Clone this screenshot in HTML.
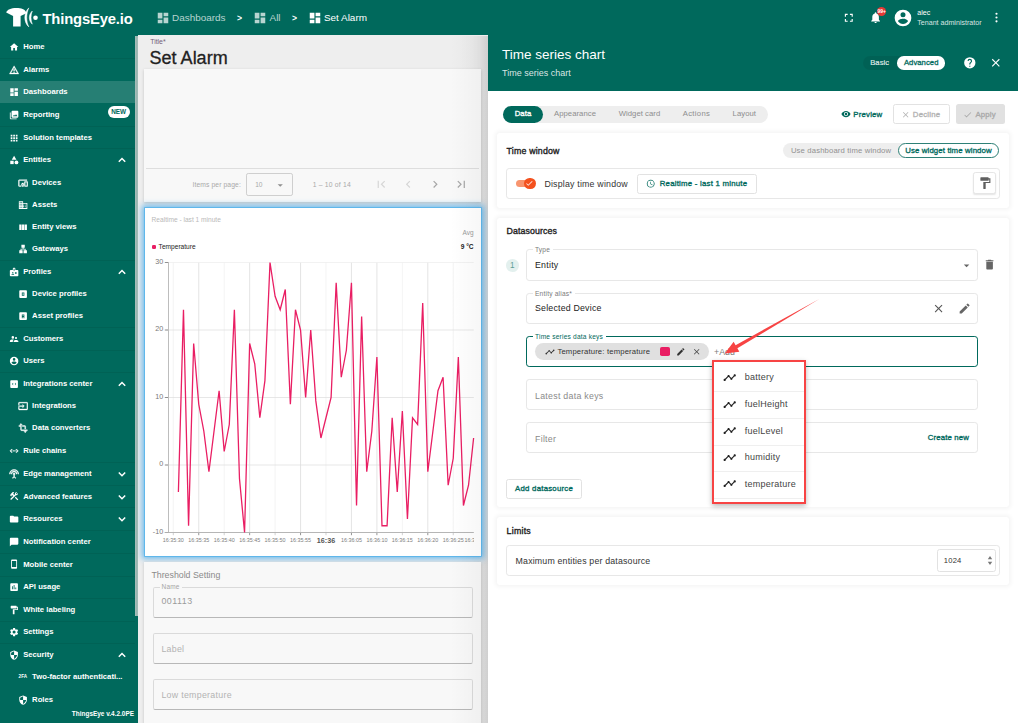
<!DOCTYPE html><html><head><meta charset="utf-8"><title>ThingsEye</title><style>
html,body{margin:0;padding:0}body{width:1018px;height:723px;overflow:hidden;position:relative;background:#eeeeee;font-family:"Liberation Sans",sans-serif;}
div,svg{position:absolute}
</style></head><body>
<div style="position:absolute;left:0.00px;top:0.00px;width:1018.00px;height:35.60px;box-sizing:border-box;background:#00695c;"></div>
<div style="position:absolute;left:138.40px;top:35.20px;width:350.60px;height:687.80px;box-sizing:border-box;background:#eeeeee;"></div>
<div style="position:absolute;left:460.00px;top:35.60px;width:28.30px;height:687.40px;box-sizing:border-box;background:linear-gradient(to right,rgba(0,0,0,0) 0%,rgba(0,0,0,0.01) 40%,rgba(0,0,0,0.035) 70%,rgba(0,0,0,0.10) 100%);"></div>
<div style="position:absolute;left:150.20px;top:31.70px;line-height:20px;font-size:6.9px;color:#755f78;font-weight:normal;white-space:nowrap;">Title*</div>
<div style="position:absolute;left:149.60px;top:47.55px;line-height:20px;font-size:18.0px;color:#212121;font-weight:normal;white-space:nowrap;-webkit-text-stroke:0.3px #212121;">Set Alarm</div>
<div style="position:absolute;left:144.20px;top:68.70px;width:336.80px;height:133.20px;box-sizing:border-box;background:#f8f8f8;box-shadow:0 1px 3px rgba(0,0,0,0.18);"></div>
<div style="position:absolute;left:146.30px;top:167.80px;width:332.70px;height:0.80px;box-sizing:border-box;background:#dedede;"></div>
<div style="position:absolute;left:192.50px;top:174.60px;line-height:20px;font-size:6.75px;color:#a9a9a9;font-weight:normal;white-space:nowrap;letter-spacing:0.1px;">Items per page:</div>
<div style="position:absolute;left:246.10px;top:172.90px;width:46.50px;height:22.80px;box-sizing:border-box;border:1px solid #cfcfcf;border-radius:2.2px;"></div>
<div style="position:absolute;left:255.20px;top:174.60px;line-height:20px;font-size:6.6px;color:#a9a9a9;font-weight:normal;white-space:nowrap;">10</div>
<svg style="position:absolute;left:274.25px;top:178.65px;" width="12.5" height="12.5" viewBox="0 0 24 24" fill="#8f8f8f"><path d="M7 10l5 5 5-5z"/></svg>
<div style="position:absolute;left:312.80px;top:174.60px;line-height:20px;font-size:6.75px;color:#a9a9a9;font-weight:normal;white-space:nowrap;letter-spacing:0.2px;">1 – 10 of 14</div>
<svg style="position:absolute;left:374.35px;top:177.05px;" width="14.5" height="14.5" viewBox="0 0 24 24" fill="#d6d6d6"><path d="M18.410 16.590L13.820 12l4.590-4.590L17 6l-6 6 6 6zM6 6h2v12H6z"/></svg>
<svg style="position:absolute;left:400.95px;top:177.05px;" width="14.5" height="14.5" viewBox="0 0 24 24" fill="#d6d6d6"><path d="M15.410 7.410L14 6l-6 6 6 6 1.410-1.410L10.830 12z"/></svg>
<svg style="position:absolute;left:427.75px;top:177.05px;" width="14.5" height="14.5" viewBox="0 0 24 24" fill="#a6a6a6"><path d="M10 6L8.590 7.410 13.170 12l-4.580 4.590L10 18l6-6z"/></svg>
<svg style="position:absolute;left:454.35px;top:177.05px;" width="14.5" height="14.5" viewBox="0 0 24 24" fill="#a6a6a6"><path d="M5.590 7.410L10.180 12l-4.590 4.590L7 18l6-6-6-6zM16 6h2v12h-2z"/></svg>
<div style="position:absolute;left:144.50px;top:208.00px;width:336.50px;height:347.90px;box-sizing:border-box;background:#ffffff;box-shadow:0 0 0 0.8px #55b3ec,0 0 6px 3px rgba(80,172,232,0.8);"></div>
<div style="position:absolute;left:151.60px;top:210.00px;line-height:20px;font-size:6.6px;color:#b9b9b9;font-weight:normal;white-space:nowrap;">Realtime - last 1 minute</div>
<div style="position:absolute;right:544.40px;top:222.80px;line-height:20px;font-size:6.5px;color:#9a9a9a;font-weight:normal;white-space:nowrap;">Avg</div>
<div style="position:absolute;left:151.80px;top:244.50px;width:4.20px;height:4.20px;box-sizing:border-box;background:#e91e63;border-radius:1.3px;"></div>
<div style="position:absolute;left:158.60px;top:236.50px;line-height:20px;font-size:6.6px;color:#222;font-weight:normal;white-space:nowrap;">Temperature</div>
<div style="position:absolute;right:544.40px;top:236.50px;line-height:20px;font-size:6.6px;color:#222;font-weight:bold;white-space:nowrap;">9 °C</div>
<svg style="left:0;top:0" width="1018" height="723" viewBox="0 0 1018 723"><line x1="173.30" y1="262.5" x2="173.30" y2="532.5" stroke="#efefef" stroke-width="0.7"/><line x1="173.30" y1="532.5" x2="173.30" y2="535.2" stroke="#bbb" stroke-width="0.7"/><line x1="198.75" y1="262.5" x2="198.75" y2="532.5" stroke="#d9d9d9" stroke-width="0.7"/><line x1="198.75" y1="532.5" x2="198.75" y2="535.2" stroke="#666" stroke-width="0.7"/><line x1="224.20" y1="262.5" x2="224.20" y2="532.5" stroke="#efefef" stroke-width="0.7"/><line x1="224.20" y1="532.5" x2="224.20" y2="535.2" stroke="#bbb" stroke-width="0.7"/><line x1="249.65" y1="262.5" x2="249.65" y2="532.5" stroke="#d9d9d9" stroke-width="0.7"/><line x1="249.65" y1="532.5" x2="249.65" y2="535.2" stroke="#666" stroke-width="0.7"/><line x1="275.10" y1="262.5" x2="275.10" y2="532.5" stroke="#efefef" stroke-width="0.7"/><line x1="275.10" y1="532.5" x2="275.10" y2="535.2" stroke="#bbb" stroke-width="0.7"/><line x1="300.55" y1="262.5" x2="300.55" y2="532.5" stroke="#d9d9d9" stroke-width="0.7"/><line x1="300.55" y1="532.5" x2="300.55" y2="535.2" stroke="#666" stroke-width="0.7"/><line x1="326.00" y1="262.5" x2="326.00" y2="532.5" stroke="#efefef" stroke-width="0.7"/><line x1="326.00" y1="532.5" x2="326.00" y2="535.2" stroke="#bbb" stroke-width="0.7"/><line x1="351.45" y1="262.5" x2="351.45" y2="532.5" stroke="#d9d9d9" stroke-width="0.7"/><line x1="351.45" y1="532.5" x2="351.45" y2="535.2" stroke="#666" stroke-width="0.7"/><line x1="376.90" y1="262.5" x2="376.90" y2="532.5" stroke="#d9d9d9" stroke-width="0.7"/><line x1="376.90" y1="532.5" x2="376.90" y2="535.2" stroke="#666" stroke-width="0.7"/><line x1="402.35" y1="262.5" x2="402.35" y2="532.5" stroke="#efefef" stroke-width="0.7"/><line x1="402.35" y1="532.5" x2="402.35" y2="535.2" stroke="#bbb" stroke-width="0.7"/><line x1="427.80" y1="262.5" x2="427.80" y2="532.5" stroke="#d9d9d9" stroke-width="0.7"/><line x1="427.80" y1="532.5" x2="427.80" y2="535.2" stroke="#666" stroke-width="0.7"/><line x1="453.25" y1="262.5" x2="453.25" y2="532.5" stroke="#efefef" stroke-width="0.7"/><line x1="453.25" y1="532.5" x2="453.25" y2="535.2" stroke="#bbb" stroke-width="0.7"/><line x1="165.6" y1="262.50" x2="473.8" y2="262.50" stroke="#ececec" stroke-width="0.7"/><line x1="164.8" y1="262.50" x2="168.5" y2="262.50" stroke="#777" stroke-width="0.8"/><line x1="165.6" y1="330.00" x2="473.8" y2="330.00" stroke="#dcdcdc" stroke-width="0.7"/><line x1="164.8" y1="330.00" x2="168.5" y2="330.00" stroke="#777" stroke-width="0.8"/><line x1="165.6" y1="397.50" x2="473.8" y2="397.50" stroke="#dcdcdc" stroke-width="0.7"/><line x1="164.8" y1="397.50" x2="168.5" y2="397.50" stroke="#777" stroke-width="0.8"/><line x1="165.6" y1="465.00" x2="473.8" y2="465.00" stroke="#dcdcdc" stroke-width="0.7"/><line x1="164.8" y1="465.00" x2="168.5" y2="465.00" stroke="#777" stroke-width="0.8"/><line x1="165.6" y1="532.50" x2="473.8" y2="532.50" stroke="#dcdcdc" stroke-width="0.7"/><line x1="164.8" y1="532.50" x2="168.5" y2="532.50" stroke="#777" stroke-width="0.8"/><line x1="168.5" y1="262" x2="168.5" y2="533" stroke="#bdbdbd" stroke-width="1"/><line x1="164.8" y1="532.5" x2="473.8" y2="532.5" stroke="#b0b0b0" stroke-width="0.9"/><polyline points="178.39,492.00 183.48,309.75 188.57,525.75 193.66,343.50 198.75,404.25 203.84,431.25 208.93,471.75 214.02,431.25 219.11,390.75 224.20,451.50 229.29,424.50 234.38,309.75 239.47,478.50 244.56,532.50 249.65,343.50 254.74,363.75 259.83,417.75 264.92,380.62 270.01,262.50 275.10,296.25 280.19,309.75 285.28,289.50 290.37,404.25 295.46,309.75 300.55,330.00 305.64,397.50 310.73,330.00 315.82,400.88 320.91,438.00 326.00,417.75 331.09,397.50 336.18,282.75 341.27,377.25 346.36,350.25 351.45,282.75 356.54,505.50 361.63,316.50 366.72,471.75 371.81,431.25 376.90,357.00 381.99,525.75 387.08,525.75 392.17,417.75 397.26,492.00 402.35,411.00 407.44,519.00 412.53,417.75 417.62,424.50 422.71,303.00 427.80,471.75 432.89,431.25 437.98,390.75 443.07,377.25 448.16,485.25 453.25,458.25 458.34,357.00 463.43,505.50 468.52,485.25 473.61,438.00" fill="none" stroke="#e91e63" stroke-width="1.3" stroke-linejoin="miter"/></svg>
<div style="position:absolute;right:854.80px;top:251.80px;line-height:20px;font-size:7.2px;color:#777;font-weight:normal;white-space:nowrap;">30</div>
<div style="position:absolute;right:854.80px;top:319.30px;line-height:20px;font-size:7.2px;color:#777;font-weight:normal;white-space:nowrap;">20</div>
<div style="position:absolute;right:854.80px;top:386.80px;line-height:20px;font-size:7.2px;color:#777;font-weight:normal;white-space:nowrap;">10</div>
<div style="position:absolute;right:854.80px;top:454.30px;line-height:20px;font-size:7.2px;color:#777;font-weight:normal;white-space:nowrap;">0</div>
<div style="position:absolute;right:854.80px;top:521.80px;line-height:20px;font-size:7.2px;color:#777;font-weight:normal;white-space:nowrap;">-10</div>
<div style="position:absolute;left:73.30px;width:200px;text-align:center;top:530.20px;line-height:20px;font-size:5.4px;color:#7d7d7d;font-weight:normal;white-space:nowrap;">16:35:30</div>
<div style="position:absolute;left:98.75px;width:200px;text-align:center;top:530.20px;line-height:20px;font-size:5.4px;color:#7d7d7d;font-weight:normal;white-space:nowrap;">16:35:35</div>
<div style="position:absolute;left:124.20px;width:200px;text-align:center;top:530.20px;line-height:20px;font-size:5.4px;color:#7d7d7d;font-weight:normal;white-space:nowrap;">16:35:40</div>
<div style="position:absolute;left:149.65px;width:200px;text-align:center;top:530.20px;line-height:20px;font-size:5.4px;color:#7d7d7d;font-weight:normal;white-space:nowrap;">16:35:45</div>
<div style="position:absolute;left:175.10px;width:200px;text-align:center;top:530.20px;line-height:20px;font-size:5.4px;color:#7d7d7d;font-weight:normal;white-space:nowrap;">16:35:50</div>
<div style="position:absolute;left:200.55px;width:200px;text-align:center;top:530.20px;line-height:20px;font-size:5.4px;color:#7d7d7d;font-weight:normal;white-space:nowrap;">16:35:55</div>
<div style="position:absolute;left:226.00px;width:200px;text-align:center;top:530.60px;line-height:20px;font-size:7.2px;color:#555;font-weight:bold;white-space:nowrap;">16:36</div>
<div style="position:absolute;left:251.45px;width:200px;text-align:center;top:530.20px;line-height:20px;font-size:5.4px;color:#7d7d7d;font-weight:normal;white-space:nowrap;">16:36:05</div>
<div style="position:absolute;left:276.90px;width:200px;text-align:center;top:530.20px;line-height:20px;font-size:5.4px;color:#7d7d7d;font-weight:normal;white-space:nowrap;">16:36:10</div>
<div style="position:absolute;left:302.35px;width:200px;text-align:center;top:530.20px;line-height:20px;font-size:5.4px;color:#7d7d7d;font-weight:normal;white-space:nowrap;">16:36:15</div>
<div style="position:absolute;left:327.80px;width:200px;text-align:center;top:530.20px;line-height:20px;font-size:5.4px;color:#7d7d7d;font-weight:normal;white-space:nowrap;">16:36:20</div>
<div style="position:absolute;left:353.25px;width:200px;text-align:center;top:530.20px;line-height:20px;font-size:5.4px;color:#7d7d7d;font-weight:normal;white-space:nowrap;">16:36:25</div>
<div style="position:absolute;left:464.40px;top:530.20px;line-height:20px;font-size:5.4px;color:#7d7d7d;font-weight:normal;white-space:nowrap;width:9.6px;overflow:hidden;">16:3</div>
<div style="position:absolute;left:144.20px;top:562.20px;width:336.80px;height:167.80px;box-sizing:border-box;background:#f8f8f8;box-shadow:0 1px 3px rgba(0,0,0,0.18);"></div>
<div style="position:absolute;left:151.40px;top:565.40px;line-height:20px;font-size:8.8px;color:#8a8a8a;font-weight:normal;white-space:nowrap;">Threshold Setting</div>
<div style="position:absolute;left:152.80px;top:587.10px;width:320.20px;height:30.90px;box-sizing:border-box;border:1px solid #dadada;border-bottom:1.3px solid #b8b8b8;border-radius:2.2px;"></div>
<div style="position:absolute;left:152.80px;top:632.90px;width:320.20px;height:31.20px;box-sizing:border-box;border:1px solid #dadada;border-bottom:1.3px solid #b8b8b8;border-radius:2.2px;"></div>
<div style="position:absolute;left:152.80px;top:678.50px;width:320.20px;height:31.50px;box-sizing:border-box;border:1px solid #dadada;border-bottom:1.3px solid #b8b8b8;border-radius:2.2px;"></div>
<div style="position:absolute;left:159.60px;top:586.60px;width:22.40px;height:2.80px;box-sizing:border-box;background:#f8f8f8;"></div>
<div style="position:absolute;left:161.60px;top:577.20px;line-height:20px;font-size:6.5px;color:#a5a5a5;font-weight:normal;white-space:nowrap;letter-spacing:0.15px;">Name</div>
<div style="position:absolute;left:161.40px;top:591.40px;line-height:20px;font-size:8.9px;color:#9b9b9b;font-weight:normal;white-space:nowrap;letter-spacing:0.5px;">001113</div>
<div style="position:absolute;left:161.40px;top:638.80px;line-height:20px;font-size:8.8px;color:#b3b3b3;font-weight:normal;white-space:nowrap;letter-spacing:0.28px;">Label</div>
<div style="position:absolute;left:161.40px;top:684.80px;line-height:20px;font-size:8.8px;color:#b3b3b3;font-weight:normal;white-space:nowrap;letter-spacing:0.3px;">Low temperature</div>
<div style="position:absolute;left:450.00px;top:35.60px;width:38.30px;height:687.40px;box-sizing:border-box;background:linear-gradient(to right,rgba(0,0,0,0),rgba(0,0,0,0.03) 80%,rgba(0,0,0,0.03));"></div>
<div style="position:absolute;left:0.00px;top:0.00px;width:138.40px;height:723.00px;box-sizing:border-box;background:#00695c;"></div>
<div style="position:absolute;left:0.00px;top:81.10px;width:135.10px;height:22.20px;box-sizing:border-box;background:rgba(255,255,255,0.15);"></div>
<div style="position:absolute;left:135.10px;top:36.00px;width:3.30px;height:579.80px;box-sizing:border-box;background:linear-gradient(to right,#a9c0bc,#9ab5b0 50%,#a3bcb7);"></div>
<svg style="left:6px;top:7px" width="34" height="21" viewBox="0 0 34 21"><path fill="#fff" d="M0.2 5.500C1.000 2.600 5.000 0.900 10.300 0.900C15.600 0.900 18.800 2.500 19.600 4.200L20.400 6.300L14.600 8.900V19.400H7.100V8.900z"/><path d="M22.800 0.900C17.500 6.000 17.500 15.000 22.800 19.900C20.100 14.500 20.100 6.500 22.800 0.900z" fill="#fff" stroke="#fff" stroke-width="0.5"/><path d="M26.300 4.000C22.300 7.500 22.300 13.800 26.300 17.200C24.600 13.500 24.600 7.800 26.300 4.000z" fill="#fff" stroke="#fff" stroke-width="0.5"/><circle cx="29.500" cy="10.800" r="2.300" fill="#fff"/></svg>
<div style="position:absolute;left:42.50px;top:8.70px;line-height:20px;font-size:14.8px;color:#fff;font-weight:bold;white-space:nowrap;letter-spacing:-0.17px;">ThingsEye.io</div>
<svg style="position:absolute;left:8.60px;top:41.90px;" width="10.2" height="10.2" viewBox="0 0 24 24" fill="#fff"><path d="M10 20v-6h4v6h5v-8h3L12 3 2 12h3v8z"/></svg>
<div style="position:absolute;left:23.20px;top:37.00px;line-height:20px;font-size:7.7px;color:#fff;font-weight:bold;white-space:nowrap;">Home</div>
<svg style="position:absolute;left:8.60px;top:64.50px;" width="10.2" height="10.2" viewBox="0 0 24 24" fill="#fff" stroke="#fff" stroke-width="0.9"><path d="M12 5.99L19.53 19H4.47L12 5.99M12 2L1 21h22L12 2zm1 14h-2v2h2v-2zm0-6h-2v4h2v-4z"/></svg>
<div style="position:absolute;left:23.20px;top:59.60px;line-height:20px;font-size:7.7px;color:#fff;font-weight:bold;white-space:nowrap;">Alarms</div>
<svg style="position:absolute;left:8.60px;top:87.20px;" width="10.2" height="10.2" viewBox="0 0 24 24" fill="#fff"><path d="M3 13h8V3H3v10zm0 8h8v-6H3v6zm10 0h8V11h-8v10zm0-18v6h8V3h-8z"/></svg>
<div style="position:absolute;left:23.20px;top:82.30px;line-height:20px;font-size:7.7px;color:#fff;font-weight:bold;white-space:nowrap;">Dashboards</div>
<svg style="position:absolute;left:8.60px;top:109.90px;" width="10.2" height="10.2" viewBox="0 0 24 24" fill="#fff"><path d="M4 6H2v14c0 1.1.9 2 2 2h14v-2H4V6zm16-4H8c-1.1 0-2 .9-2 2v12c0 1.1.9 2 2 2h12c1.1 0 2-.9 2-2V4c0-1.1-.9-2-2-2zM9 15l3-4 2 2.7 2.5-3.7L20 15H9z"/></svg>
<div style="position:absolute;left:23.20px;top:105.00px;line-height:20px;font-size:7.7px;color:#fff;font-weight:bold;white-space:nowrap;">Reporting</div>
<svg style="position:absolute;left:8.60px;top:132.50px;" width="10.2" height="10.2" viewBox="0 0 24 24" fill="#fff"><path d="M4 8h4V4H4v4zm6 12h4v-4h-4v4zm-6 0h4v-4H4v4zm0-6h4v-4H4v4zm6 0h4v-4h-4v4zm6-10v4h4V4h-4zm-6 4h4V4h-4v4zm6 6h4v-4h-4v4zm0 6h4v-4h-4v4z"/></svg>
<div style="position:absolute;left:23.20px;top:127.60px;line-height:20px;font-size:7.7px;color:#fff;font-weight:bold;white-space:nowrap;">Solution templates</div>
<svg style="position:absolute;left:8.60px;top:155.20px;" width="10.2" height="10.2" viewBox="0 0 24 24" fill="#fff"><path d="M12 2l-5.5 9h11z"/><circle cx="17.5" cy="17.5" r="4.5"/><path d="M3 13.5h8v8H3z"/></svg>
<div style="position:absolute;left:23.20px;top:150.30px;line-height:20px;font-size:7.7px;color:#fff;font-weight:bold;white-space:nowrap;">Entities</div>
<svg style="left:116.00px;top:154.40px" width="12" height="12" viewBox="-6 -6 12 12"><path d="M-3.2 1.700L0 -1.500L3.200 1.700" fill="none" stroke="#fff" stroke-width="1.500"/></svg>
<svg style="position:absolute;left:17.70px;top:177.70px;" width="10.2" height="10.2" viewBox="0 0 24 24" fill="#fff" stroke="#fff" stroke-width="0.9"><path d="M3 6h18V4H3c-1.1 0-2 .9-2 2v12c0 1.1.9 2 2 2h4v-2H3V6zm10 6H9v1.8c-.6.5-1 1.300-1 2.200s.4 1.700 1 2.200V20h4v-1.800c.6-.5 1-1.300 1-2.200s-.4-1.700-1-2.200V12zm-2 5.500c-.8 0-1.500-.7-1.500-1.500s.7-1.500 1.500-1.500 1.500.7 1.500 1.500-.7 1.500-1.500 1.500zM22 8h-6c-.5 0-1 .5-1 1v10c0 .5.5 1 1 1h6c.5 0 1-.5 1-1V9c0-.5-.5-1-1-1zm-1 10h-4v-8h4v8z"/></svg>
<div style="position:absolute;left:32.10px;top:172.80px;line-height:20px;font-size:7.7px;color:#fff;font-weight:bold;white-space:nowrap;">Devices</div>
<svg style="position:absolute;left:17.70px;top:199.50px;" width="10.2" height="10.2" viewBox="0 0 24 24" fill="#fff"><path d="M12 7V3H2v18h20V7H12zM6 19H4v-2h2v2zm0-4H4v-2h2v2zm0-4H4V9h2v2zm0-4H4V5h2v2zm4 12H8v-2h2v2zm0-4H8v-2h2v2zm0-4H8V9h2v2zm0-4H8V5h2v2zm10 12h-8v-2h2v-2h-2v-2h2v-2h-2V9h8v10zm-2-8h-2v2h2v-2zm0 4h-2v2h2v-2z"/></svg>
<div style="position:absolute;left:32.10px;top:194.60px;line-height:20px;font-size:7.7px;color:#fff;font-weight:bold;white-space:nowrap;">Assets</div>
<svg style="position:absolute;left:17.70px;top:221.60px;" width="10.2" height="10.2" viewBox="0 0 24 24" fill="#fff"><path d="M3 6h5.500v13H3zM9.500 6h5v13h-5zM15.500 6H21v13h-5.500z"/></svg>
<div style="position:absolute;left:32.10px;top:216.70px;line-height:20px;font-size:7.7px;color:#fff;font-weight:bold;white-space:nowrap;">Entity views</div>
<svg style="position:absolute;left:17.70px;top:243.80px;" width="10.2" height="10.2" viewBox="0 0 24 24" fill="#fff"><path d="M13 22h8v-7h-3v-4h-5V9h3V2H8v7h3v2H6v4H3v7h8v-7H8v-2h8v2h-3v7z"/></svg>
<div style="position:absolute;left:32.10px;top:238.90px;line-height:20px;font-size:7.7px;color:#fff;font-weight:bold;white-space:nowrap;">Gateways</div>
<svg style="position:absolute;left:8.60px;top:266.70px;" width="10.2" height="10.2" viewBox="0 0 24 24" fill="#fff"><path fill-rule="evenodd" d="M20 7h-5V4c0-1.100-.9-2-2-2h-2c-1.100 0-2 .9-2 2v3H4c-1.100 0-2 .9-2 2v11c0 1.100.9 2 2 2h16c1.100 0 2-.9 2-2V9c0-1.100-.9-2-2-2zM9 12a1.500 1.500 0 1 1 0 3 1.500 1.500 0 0 1 0-3zm3 6H6v-.75c0-1 2-1.500 3-1.500s3 .5 3 1.500V18zm1-9h-2V4h2v5zm5 7.500h-4V15h4v1.500zm0-3h-4V12h4v1.500z"/></svg>
<div style="position:absolute;left:23.20px;top:261.80px;line-height:20px;font-size:7.7px;color:#fff;font-weight:bold;white-space:nowrap;">Profiles</div>
<svg style="left:116.00px;top:265.90px" width="12" height="12" viewBox="-6 -6 12 12"><path d="M-3.2 1.700L0 -1.500L3.200 1.700" fill="none" stroke="#fff" stroke-width="1.500"/></svg>
<svg style="position:absolute;left:17.70px;top:288.80px;" width="10.2" height="10.2" viewBox="0 0 24 24" fill="#fff"><path fill-rule="evenodd" d="M5 3h14a2 2 0 0 1 2 2v14a2 2 0 0 1-2 2H5a2 2 0 0 1-2-2V5a2 2 0 0 1 2-2zm4 5v8h6V8H9zm2 2h2v4h-2v-4z"/></svg>
<div style="position:absolute;left:32.10px;top:283.90px;line-height:20px;font-size:7.7px;color:#fff;font-weight:bold;white-space:nowrap;">Device profiles</div>
<svg style="position:absolute;left:17.70px;top:311.00px;" width="10.2" height="10.2" viewBox="0 0 24 24" fill="#fff"><path fill-rule="evenodd" d="M5 3h14a2 2 0 0 1 2 2v14a2 2 0 0 1-2 2H5a2 2 0 0 1-2-2V5a2 2 0 0 1 2-2zm4 5v9h2v-3h2v3h2V8H9zm2 2h2v2h-2v-2z"/></svg>
<div style="position:absolute;left:32.10px;top:306.10px;line-height:20px;font-size:7.7px;color:#fff;font-weight:bold;white-space:nowrap;">Asset profiles</div>
<svg style="position:absolute;left:8.60px;top:333.60px;" width="10.2" height="10.2" viewBox="0 0 24 24" fill="#fff"><path d="M16.500 12a2.500 2.500 0 1 0 0-5 2.500 2.500 0 0 0 0 5zM9 11a3 3 0 1 0 0-6 3 3 0 0 0 0 6zm7.500 3c-1.830 0-5.500.92-5.500 2.750V19h11v-2.250c0-1.830-3.670-2.750-5.500-2.750zM9 13c-2.330 0-7 1.170-7 3.500V19h7v-2.250c0-.85.330-2.340 2.370-3.470C10.500 13.100 9.660 13 9 13z"/></svg>
<div style="position:absolute;left:23.20px;top:328.70px;line-height:20px;font-size:7.7px;color:#fff;font-weight:bold;white-space:nowrap;">Customers</div>
<svg style="position:absolute;left:8.60px;top:356.30px;" width="10.2" height="10.2" viewBox="0 0 24 24" fill="#fff"><path fill-rule="evenodd" d="M12 2a10 10 0 1 0 0 20 10 10 0 0 0 0-20zm0 3a3 3 0 1 1 0 6 3 3 0 0 1 0-6zm0 14.200c-2.500 0-4.710-1.280-6-3.220.030-1.990 4-3.080 6-3.080 1.990 0 5.970 1.090 6 3.080-1.290 1.940-3.500 3.220-6 3.220z"/></svg>
<div style="position:absolute;left:23.20px;top:351.40px;line-height:20px;font-size:7.7px;color:#fff;font-weight:bold;white-space:nowrap;">Users</div>
<svg style="position:absolute;left:8.60px;top:378.90px;" width="10.2" height="10.2" viewBox="0 0 24 24" fill="#fff"><path fill-rule="evenodd" d="M5 3h14a2 2 0 0 1 2 2v14a2 2 0 0 1-2 2H5a2 2 0 0 1-2-2V5a2 2 0 0 1 2-2zm4.500 6L7 12l2.500 3 .9-.8L8.600 12l1.800-2.200zM14.500 9l-.9.8 1.800 2.200-1.800 2.200.9.800L17 12z"/></svg>
<div style="position:absolute;left:23.20px;top:374.00px;line-height:20px;font-size:7.7px;color:#fff;font-weight:bold;white-space:nowrap;">Integrations center</div>
<svg style="left:116.00px;top:378.10px" width="12" height="12" viewBox="-6 -6 12 12"><path d="M-3.2 1.700L0 -1.500L3.200 1.700" fill="none" stroke="#fff" stroke-width="1.500"/></svg>
<svg style="position:absolute;left:17.70px;top:401.10px;" width="10.2" height="10.2" viewBox="0 0 24 24" fill="#fff" stroke="#fff" stroke-width="0.9"><path d="M21 3H3c-1.100 0-2 .9-2 2v4h2V5h18v14H3v-4H1v4c0 1.100.9 2 2 2h18c1.100 0 2-.9 2-2V5c0-1.100-.9-2-2-2zM11 16l4-4-4-4v3H1v2h10v3z"/></svg>
<div style="position:absolute;left:32.10px;top:396.20px;line-height:20px;font-size:7.7px;color:#fff;font-weight:bold;white-space:nowrap;">Integrations</div>
<svg style="position:absolute;left:17.70px;top:423.20px;" width="10.2" height="10.2" viewBox="0 0 24 24" fill="#fff" stroke="#fff" stroke-width="0.9"><path d="M22 18v-2H8V4h2L7 1 4 4h2v2H2v2h4v8c0 1.100.9 2 2 2h8v2h-2l3 3 3-3h-2v-2h4zM10 8h6v6h2V8c0-1.100-.9-2-2-2h-6v2z"/></svg>
<div style="position:absolute;left:32.10px;top:418.30px;line-height:20px;font-size:7.7px;color:#fff;font-weight:bold;white-space:nowrap;">Data converters</div>
<svg style="position:absolute;left:8.60px;top:445.90px;" width="10.2" height="10.2" viewBox="0 0 24 24" fill="#fff" stroke="#fff" stroke-width="0.9"><path d="M7.800 8.400L6.400 7 2 11.500l4.400 4.500 1.400-1.400-3-3.100zM16.200 8.400l3 3.100-3 3.100 1.400 1.400 4.400-4.500L17.600 7zM9 10.500h2v2H9zM13 10.500h2v2h-2z"/></svg>
<div style="position:absolute;left:23.20px;top:441.00px;line-height:20px;font-size:7.7px;color:#fff;font-weight:bold;white-space:nowrap;">Rule chains</div>
<svg style="position:absolute;left:8.60px;top:468.50px;" width="10.2" height="10.2" viewBox="0 0 24 24" fill="#fff" stroke="#fff" stroke-width="0.9"><path d="M12 5c-3.900 0-7 3.100-7 7h2c0-2.800 2.200-5 5-5s5 2.200 5 5h2c0-3.900-3.100-7-7-7zm1 9.300c.9-.4 1.500-1.300 1.500-2.300 0-1.400-1.100-2.500-2.500-2.500S9.500 10.600 9.500 12c0 1 .6 1.900 1.500 2.300v3.300L7.600 21 9 22.400l3-3 3 3 1.400-1.400-3.400-3.400v-3.300zM12 1C5.900 1 1 5.900 1 12h2c0-5 4-9 9-9s9 4 9 9h2c0-6.100-4.900-11-11-11z"/></svg>
<div style="position:absolute;left:23.20px;top:463.60px;line-height:20px;font-size:7.7px;color:#fff;font-weight:bold;white-space:nowrap;">Edge management</div>
<svg style="left:116.00px;top:467.70px" width="12" height="12" viewBox="-6 -6 12 12"><path d="M-3.2 -1.500L0 1.700L3.200 -1.500" fill="none" stroke="#fff" stroke-width="1.500"/></svg>
<svg style="position:absolute;left:8.60px;top:491.40px;" width="10.2" height="10.2" viewBox="0 0 24 24" fill="#fff"><path d="M13.800 15.900l2.100-2.100 6 6-2.100 2.100zM17.500 10c1.900 0 3.500-1.600 3.500-3.500 0-.6-.2-1.100-.4-1.600l-2.700 2.700-1.500-1.500 2.700-2.700c-.5-.2-1-.4-1.600-.4C15.600 3 14 4.600 14 6.500c0 .4.100.8.200 1.200l-1.900 1.800-1.800-1.800.7-.7-1.400-1.400 2.100-2.100c-1.200-1.200-3.100-1.200-4.200 0L4.200 7.100l1.400 1.400H2.800l-.7.700 3.500 3.500.7-.7V9.200l1.400 1.400.7-.7 1.800 1.800-7.400 7.400 2.100 2.100L16.300 9.800c.4.100.8.200 1.200.2z"/></svg>
<div style="position:absolute;left:23.20px;top:486.50px;line-height:20px;font-size:7.7px;color:#fff;font-weight:bold;white-space:nowrap;">Advanced features</div>
<svg style="left:116.00px;top:490.60px" width="12" height="12" viewBox="-6 -6 12 12"><path d="M-3.2 -1.500L0 1.700L3.200 -1.500" fill="none" stroke="#fff" stroke-width="1.500"/></svg>
<svg style="position:absolute;left:8.60px;top:514.10px;" width="10.2" height="10.2" viewBox="0 0 24 24" fill="#fff"><path d="M10 4H4c-1.100 0-2 .9-2 2v12c0 1.100.9 2 2 2h16c1.100 0 2-.9 2-2V8c0-1.100-.9-2-2-2h-8l-2-2z"/></svg>
<div style="position:absolute;left:23.20px;top:509.20px;line-height:20px;font-size:7.7px;color:#fff;font-weight:bold;white-space:nowrap;">Resources</div>
<svg style="left:116.00px;top:513.30px" width="12" height="12" viewBox="-6 -6 12 12"><path d="M-3.2 -1.500L0 1.700L3.200 -1.500" fill="none" stroke="#fff" stroke-width="1.500"/></svg>
<svg style="position:absolute;left:8.60px;top:536.80px;" width="10.2" height="10.2" viewBox="0 0 24 24" fill="#fff"><path d="M20 2H4c-1.100 0-2 .9-2 2v18l4-4h14c1.100 0 2-.9 2-2V4c0-1.100-.9-2-2-2z"/></svg>
<div style="position:absolute;left:23.20px;top:531.90px;line-height:20px;font-size:7.7px;color:#fff;font-weight:bold;white-space:nowrap;">Notification center</div>
<svg style="position:absolute;left:8.60px;top:559.40px;" width="10.2" height="10.2" viewBox="0 0 24 24" fill="#fff"><path d="M17 1H7c-1.100 0-2 .9-2 2v18c0 1.100.9 2 2 2h10c1.100 0 2-.9 2-2V3c0-1.100-.9-2-2-2zm0 18H7V5h10v14z"/></svg>
<div style="position:absolute;left:23.20px;top:554.50px;line-height:20px;font-size:7.7px;color:#fff;font-weight:bold;white-space:nowrap;">Mobile center</div>
<svg style="position:absolute;left:8.60px;top:582.30px;" width="10.2" height="10.2" viewBox="0 0 24 24" fill="#fff"><path fill-rule="evenodd" d="M5 3h14a2 2 0 0 1 2 2v14a2 2 0 0 1-2 2H5a2 2 0 0 1-2-2V5a2 2 0 0 1 2-2zm2 7v7h2v-7H7zm4-3v10h2V7h-2zm4 6v4h2v-4h-2z"/></svg>
<div style="position:absolute;left:23.20px;top:577.40px;line-height:20px;font-size:7.7px;color:#fff;font-weight:bold;white-space:nowrap;">API usage</div>
<svg style="position:absolute;left:8.60px;top:604.70px;" width="10.2" height="10.2" viewBox="0 0 24 24" fill="#fff"><path d="M18 4V3c0-.55-.45-1-1-1H5c-.55 0-1 .45-1 1v4c0 .55.45 1 1 1h12c.55 0 1-.45 1-1V6h1v4H9v11c0 .55.45 1 1 1h2c.55 0 1-.45 1-1v-9h8V4h-3z"/></svg>
<div style="position:absolute;left:23.20px;top:599.80px;line-height:20px;font-size:7.7px;color:#fff;font-weight:bold;white-space:nowrap;">White labeling</div>
<svg style="position:absolute;left:8.60px;top:627.30px;" width="10.2" height="10.2" viewBox="0 0 24 24" fill="#fff"><path fill-rule="evenodd" d="M19.140 12.940c.040-.300.060-.610.060-.940s-.020-.640-.070-.940l2.030-1.580a.49.49 0 0 0 .120-.610l-1.920-3.320a.49.49 0 0 0-.590-.220l-2.390.960c-.500-.380-1.030-.700-1.620-.940l-.360-2.540a.48.48 0 0 0-.480-.410h-3.840a.47.47 0 0 0-.470.410l-.360 2.540c-.590.240-1.130.570-1.620.940l-2.390-.960a.48.48 0 0 0-.590.220L2.740 8.870a.48.48 0 0 0 .120.610l2.030 1.580c-.050.300-.090.630-.090.940s.020.640.070.940l-2.030 1.580a.49.49 0 0 0-.120.610l1.920 3.320c.120.220.370.290.590.220l2.390-.960c.500.380 1.030.700 1.620.940l.360 2.540c.050.240.240.410.480.410h3.840c.240 0 .440-.170.470-.410l.360-2.540c.590-.240 1.130-.560 1.620-.940l2.390.960c.220.080.470 0 .590-.220l1.920-3.320a.49.49 0 0 0-.120-.610l-2.010-1.580zM12 15.600a3.600 3.600 0 1 1 0-7.200 3.600 3.600 0 0 1 0 7.200z"/></svg>
<div style="position:absolute;left:23.20px;top:622.40px;line-height:20px;font-size:7.7px;color:#fff;font-weight:bold;white-space:nowrap;">Settings</div>
<svg style="position:absolute;left:8.60px;top:650.20px;" width="10.2" height="10.2" viewBox="0 0 24 24" fill="#fff"><path d="M12 1L3 5v6c0 5.550 3.840 10.740 9 12 5.160-1.260 9-6.450 9-12V5l-9-4zm0 10.990h7c-.53 4.120-3.280 7.790-7 8.940V12H5V6.300l7-3.110v8.800z"/></svg>
<div style="position:absolute;left:23.20px;top:645.30px;line-height:20px;font-size:7.7px;color:#fff;font-weight:bold;white-space:nowrap;">Security</div>
<svg style="left:116.00px;top:649.40px" width="12" height="12" viewBox="-6 -6 12 12"><path d="M-3.2 1.700L0 -1.500L3.200 1.700" fill="none" stroke="#fff" stroke-width="1.500"/></svg>
<div style="position:absolute;left:18.60px;top:667.10px;line-height:20px;font-size:4.6px;color:#fff;font-weight:bold;white-space:nowrap;">2FA</div>
<div style="position:absolute;left:32.10px;top:667.40px;line-height:20px;font-size:7.7px;color:#fff;font-weight:bold;white-space:nowrap;">Two-factor authenticati...</div>
<svg style="position:absolute;left:17.70px;top:694.60px;" width="10.2" height="10.2" viewBox="0 0 24 24" fill="#fff"><path d="M12 1L3 5v6c0 5.550 3.840 10.740 9 12 5.160-1.260 9-6.450 9-12V5l-9-4zm0 10.990h7c-.53 4.120-3.280 7.790-7 8.940V12H5V6.300l7-3.110v8.800z"/></svg>
<div style="position:absolute;left:32.10px;top:689.70px;line-height:20px;font-size:7.7px;color:#fff;font-weight:bold;white-space:nowrap;">Roles</div>
<div style="position:absolute;left:107.80px;top:106.10px;width:21.80px;height:11.50px;box-sizing:border-box;background:#fff;border-radius:6px;"></div>
<div style="position:absolute;left:18.70px;width:200px;text-align:center;top:102.00px;line-height:20px;font-size:6.4px;color:#00695c;font-weight:bold;white-space:nowrap;">NEW</div>
<div style="position:absolute;left:0.00px;top:57.60px;width:135.10px;height:0.80px;box-sizing:border-box;background:rgba(0,0,0,0.065);"></div>
<div style="position:absolute;left:0.00px;top:125.50px;width:135.10px;height:0.80px;box-sizing:border-box;background:rgba(0,0,0,0.065);"></div>
<div style="position:absolute;left:0.00px;top:148.00px;width:135.10px;height:0.80px;box-sizing:border-box;background:rgba(0,0,0,0.065);"></div>
<div style="position:absolute;left:0.00px;top:259.90px;width:135.10px;height:0.80px;box-sizing:border-box;background:rgba(0,0,0,0.065);"></div>
<div style="position:absolute;left:0.00px;top:326.80px;width:135.10px;height:0.80px;box-sizing:border-box;background:rgba(0,0,0,0.065);"></div>
<div style="position:absolute;left:0.00px;top:349.50px;width:135.10px;height:0.80px;box-sizing:border-box;background:rgba(0,0,0,0.065);"></div>
<div style="position:absolute;left:0.00px;top:371.80px;width:135.10px;height:0.80px;box-sizing:border-box;background:rgba(0,0,0,0.065);"></div>
<div style="position:absolute;left:0.00px;top:461.70px;width:135.10px;height:0.80px;box-sizing:border-box;background:rgba(0,0,0,0.065);"></div>
<div style="position:absolute;left:0.00px;top:484.70px;width:135.10px;height:0.80px;box-sizing:border-box;background:rgba(0,0,0,0.065);"></div>
<div style="position:absolute;left:0.00px;top:507.30px;width:135.10px;height:0.80px;box-sizing:border-box;background:rgba(0,0,0,0.065);"></div>
<div style="position:absolute;left:0.00px;top:530.00px;width:135.10px;height:0.80px;box-sizing:border-box;background:rgba(0,0,0,0.065);"></div>
<div style="position:absolute;left:0.00px;top:552.90px;width:135.10px;height:0.80px;box-sizing:border-box;background:rgba(0,0,0,0.065);"></div>
<div style="position:absolute;left:0.00px;top:575.50px;width:135.10px;height:0.80px;box-sizing:border-box;background:rgba(0,0,0,0.065);"></div>
<div style="position:absolute;left:0.00px;top:598.10px;width:135.10px;height:0.80px;box-sizing:border-box;background:rgba(0,0,0,0.065);"></div>
<div style="position:absolute;left:0.00px;top:620.60px;width:135.10px;height:0.80px;box-sizing:border-box;background:rgba(0,0,0,0.065);"></div>
<div style="position:absolute;left:0.00px;top:643.30px;width:135.10px;height:0.80px;box-sizing:border-box;background:rgba(0,0,0,0.065);"></div>
<div style="position:absolute;right:884.00px;top:703.60px;line-height:20px;font-size:6.45px;color:#fff;font-weight:bold;white-space:nowrap;">ThingsEye v.4.2.0PE</div>
<svg style="position:absolute;left:155.70px;top:11.10px;" width="14.0" height="14.0" viewBox="0 0 24 24" fill="rgba(255,255,255,0.72)"><path d="M3 13h8V3H3v10zm0 8h8v-6H3v6zm10 0h8V11h-8v10zm0-18v6h8V3h-8z"/></svg>
<div style="position:absolute;left:172.00px;top:8.20px;line-height:20px;font-size:9.95px;color:rgba(255,255,255,0.72);font-weight:normal;white-space:nowrap;">Dashboards</div>
<div style="position:absolute;left:237.00px;top:7.60px;line-height:20px;font-size:8.6px;color:#fff;font-weight:bold;white-space:nowrap;">&gt;</div>
<svg style="position:absolute;left:253.10px;top:11.10px;" width="14.0" height="14.0" viewBox="0 0 24 24" fill="rgba(255,255,255,0.72)"><path d="M3 13h8V3H3v10zm0 8h8v-6H3v6zm10 0h8V11h-8v10zm0-18v6h8V3h-8z"/></svg>
<div style="position:absolute;left:269.50px;top:8.20px;line-height:20px;font-size:9.95px;color:rgba(255,255,255,0.72);font-weight:normal;white-space:nowrap;">All</div>
<div style="position:absolute;left:292.00px;top:7.60px;line-height:20px;font-size:8.6px;color:#fff;font-weight:bold;white-space:nowrap;">&gt;</div>
<svg style="position:absolute;left:308.00px;top:11.10px;" width="14.0" height="14.0" viewBox="0 0 24 24" fill="#fff"><path d="M3 13h8V3H3v10zm0 8h8v-6H3v6zm10 0h8V11h-8v10zm0-18v6h8V3h-8z"/></svg>
<div style="position:absolute;left:323.90px;top:8.20px;line-height:20px;font-size:9.95px;color:#fff;font-weight:normal;white-space:nowrap;">Set Alarm</div>
<svg style="position:absolute;left:841.90px;top:11.00px;" width="13.6" height="13.6" viewBox="0 0 24 24" fill="#fff"><path d="M7 14H5v5h5v-2H7v-3zm-2-4h2V7h3V5H5v5zm12 7h-3v2h5v-5h-2v3zM14 5v2h3v3h2V5h-5z"/></svg>
<svg style="position:absolute;left:868.70px;top:10.90px;" width="13.2" height="13.2" viewBox="0 0 24 24" fill="#fff"><path d="M12 22c1.100 0 2-.9 2-2h-4c0 1.100.89 2 2 2zm6-6v-5c0-3.070-1.640-5.640-4.500-6.320V4c0-.83-.67-1.500-1.500-1.500s-1.500.67-1.500 1.500v.68C7.630 5.360 6 7.920 6 11v5l-2 2v1h16v-1l-2-2z"/></svg>
<div style="position:absolute;left:877.00px;top:6.50px;width:9.20px;height:9.20px;box-sizing:border-box;background:#e53935;border-radius:5px;"></div>
<div style="position:absolute;left:781.70px;width:200px;text-align:center;top:1.20px;line-height:20px;font-size:5.0px;color:#fff;font-weight:bold;white-space:nowrap;">99+</div>
<svg style="position:absolute;left:893.00px;top:7.50px;" width="20.0" height="20.0" viewBox="0 0 24 24" fill="#fff"><path fill-rule="evenodd" d="M12 2a10 10 0 1 0 0 20 10 10 0 0 0 0-20zm0 3a3 3 0 1 1 0 6 3 3 0 0 1 0-6zm0 14.200c-2.500 0-4.710-1.280-6-3.220.030-1.990 4-3.080 6-3.080 1.990 0 5.970 1.090 6 3.080-1.290 1.940-3.500 3.220-6 3.220z"/></svg>
<div style="position:absolute;left:917.30px;top:2.90px;line-height:20px;font-size:7.1px;color:#fff;font-weight:normal;white-space:nowrap;">alec</div>
<div style="position:absolute;left:917.30px;top:13.30px;line-height:20px;font-size:7.1px;color:rgba(255,255,255,0.85);font-weight:normal;white-space:nowrap;">Tenant administrator</div>
<svg style="position:absolute;left:989.60px;top:11.00px;" width="13.0" height="13.0" viewBox="0 0 24 24" fill="#fff"><circle cx="12" cy="5" r="2"/><circle cx="12" cy="12" r="2"/><circle cx="12" cy="19" r="2"/></svg>
<div style="position:absolute;left:488.30px;top:35.20px;width:529.70px;height:687.80px;box-sizing:border-box;background:#ffffff;"></div>
<div style="position:absolute;left:488.30px;top:35.20px;width:529.70px;height:55.60px;box-sizing:border-box;background:#00695c;"></div>
<div style="position:absolute;left:502.10px;top:44.60px;line-height:20px;font-size:13.5px;color:#fff;font-weight:normal;white-space:nowrap;">Time series chart</div>
<div style="position:absolute;left:502.10px;top:63.20px;line-height:20px;font-size:9.0px;color:rgba(255,255,255,0.85);font-weight:normal;white-space:nowrap;">Time series chart</div>
<div style="position:absolute;left:863.20px;top:55.80px;width:82.40px;height:14.50px;box-sizing:border-box;background:rgba(0,0,0,0.07);border-radius:7.3px;"></div>
<div style="position:absolute;left:870.20px;top:53.20px;line-height:20px;font-size:7.6px;color:rgba(255,255,255,0.85);font-weight:normal;white-space:nowrap;-webkit-text-stroke:0.2px rgba(255,255,255,0.85);letter-spacing:0.1px;">Basic</div>
<div style="position:absolute;left:896.80px;top:56.30px;width:48.50px;height:13.60px;box-sizing:border-box;background:#fff;border-radius:6.8px;"></div>
<div style="position:absolute;left:903.90px;top:53.30px;line-height:20px;font-size:7.7px;color:#00695c;font-weight:normal;white-space:nowrap;-webkit-text-stroke:0.28px #00695c;letter-spacing:0.05px;">Advanced</div>
<div style="position:absolute;left:964.20px;top:58.00px;width:10.40px;height:10.40px;box-sizing:border-box;background:#00695c;border-radius:6px;"></div>
<svg style="position:absolute;left:962.60px;top:56.40px;" width="13.6" height="13.6" viewBox="0 0 24 24" fill="#fff"><path fill-rule="evenodd" d="M12 2a10 10 0 1 0 0 20 10 10 0 0 0 0-20zm1 17h-2v-2h2v2zm2.070-7.750l-.9.920C13.450 12.900 13 13.500 13 15h-2v-.5c0-1.100.45-2.100 1.170-2.830l1.240-1.260c.37-.36.590-.86.590-1.410a2 2 0 0 0-4 0H8a4 4 0 0 1 8 0c0 .88-.36 1.680-.93 2.250z"/></svg>
<svg style="position:absolute;left:989.10px;top:56.10px;" width="13.6" height="13.6" viewBox="0 0 24 24" fill="#fff"><path d="M19 6.410L17.590 5 12 10.590 6.410 5 5 6.410 10.590 12 5 17.590 6.410 19 12 13.410 17.590 19 19 17.590 13.410 12z"/></svg>
<div style="position:absolute;left:502.80px;top:105.60px;width:265.40px;height:17.10px;box-sizing:border-box;background:#eeeeee;border-radius:8.5px;"></div>
<div style="position:absolute;left:502.80px;top:105.60px;width:40.40px;height:17.10px;box-sizing:border-box;background:#00695c;border-radius:8.5px;"></div>
<div style="position:absolute;left:423.00px;width:200px;text-align:center;top:104.30px;line-height:20px;font-size:7.7px;color:#fff;font-weight:normal;white-space:nowrap;-webkit-text-stroke:0.32px #fff;letter-spacing:0.05px;">Data</div>
<div style="position:absolute;left:554.00px;top:103.90px;line-height:20px;font-size:7.7px;color:#8d8d8d;font-weight:normal;white-space:nowrap;letter-spacing:0.05px;">Appearance</div>
<div style="position:absolute;left:618.70px;top:103.90px;line-height:20px;font-size:7.7px;color:#8d8d8d;font-weight:normal;white-space:nowrap;letter-spacing:0.05px;">Widget card</div>
<div style="position:absolute;left:682.80px;top:103.90px;line-height:20px;font-size:7.7px;color:#8d8d8d;font-weight:normal;white-space:nowrap;letter-spacing:0.3px;">Actions</div>
<div style="position:absolute;left:732.60px;top:103.90px;line-height:20px;font-size:7.7px;color:#8d8d8d;font-weight:normal;white-space:nowrap;letter-spacing:0.05px;">Layout</div>
<svg style="position:absolute;left:840.50px;top:109.40px;" width="10.0" height="10.0" viewBox="0 0 24 24" fill="#00695c"><path fill-rule="evenodd" d="M12 4.500C7 4.500 2.730 7.610 1 12c1.730 4.390 6 7.500 11 7.500s9.270-3.110 11-7.500c-1.730-4.390-6-7.500-11-7.500zM12 17a5 5 0 1 1 0-10 5 5 0 0 1 0 10zm0-8a3 3 0 1 0 0 6 3 3 0 0 0 0-6z"/></svg>
<div style="position:absolute;left:853.30px;top:104.60px;line-height:20px;font-size:7.8px;color:#00695c;font-weight:normal;white-space:nowrap;-webkit-text-stroke:0.32px #00695c;letter-spacing:0.2px;">Preview</div>
<div style="position:absolute;left:893.00px;top:103.90px;width:56.80px;height:19.80px;box-sizing:border-box;background:#fff;border:1px solid #e2e2e2;border-radius:2.5px;"></div>
<svg style="position:absolute;left:900.50px;top:109.70px;" width="9.4" height="9.4" viewBox="0 0 24 24" fill="#b2b2b2"><path d="M19 6.410L17.590 5 12 10.590 6.410 5 5 6.410 10.590 12 5 17.590 6.410 19 12 13.410 17.590 19 19 17.590 13.410 12z"/></svg>
<div style="position:absolute;left:912.80px;top:104.60px;line-height:20px;font-size:7.8px;color:#b2b2b2;font-weight:normal;white-space:nowrap;-webkit-text-stroke:0.32px #b2b2b2;letter-spacing:0.2px;">Decline</div>
<div style="position:absolute;left:955.90px;top:104.00px;width:49.00px;height:19.60px;box-sizing:border-box;background:#e1e1e1;border-radius:2.5px;"></div>
<svg style="position:absolute;left:962.70px;top:109.70px;" width="9.4" height="9.4" viewBox="0 0 24 24" fill="#a9a9a9"><path d="M9 16.170L4.830 12l-1.420 1.410L9 19 21 7l-1.410-1.410z"/></svg>
<div style="position:absolute;left:975.40px;top:104.60px;line-height:20px;font-size:7.8px;color:#a9a9a9;font-weight:normal;white-space:nowrap;-webkit-text-stroke:0.32px #a9a9a9;letter-spacing:0.16px;">Apply</div>
<div style="position:absolute;left:497.00px;top:132.60px;width:512.00px;height:75.40px;box-sizing:border-box;background:#fff;border-radius:3px;box-shadow:0 0 4px 1.5px rgba(0,0,0,0.045);"></div>
<div style="position:absolute;left:506.60px;top:140.90px;line-height:20px;font-size:8.8px;color:#212121;font-weight:normal;white-space:nowrap;-webkit-text-stroke:0.35px #212121;letter-spacing:0.18px;">Time window</div>
<div style="position:absolute;left:783.30px;top:142.70px;width:215.90px;height:15.80px;box-sizing:border-box;background:#eeeeee;border-radius:7.9px;"></div>
<div style="position:absolute;left:790.90px;top:140.70px;line-height:20px;font-size:7.7px;color:#919191;font-weight:normal;white-space:nowrap;letter-spacing:0.15px;">Use dashboard time window</div>
<div style="position:absolute;left:898.10px;top:142.70px;width:101.10px;height:15.80px;box-sizing:border-box;background:#fff;border:0.9px solid #2e8177;border-radius:7.9px;"></div>
<div style="position:absolute;left:905.20px;top:140.80px;line-height:20px;font-size:7.8px;color:#00695c;font-weight:normal;white-space:nowrap;-webkit-text-stroke:0.32px #00695c;letter-spacing:0.136px;">Use widget time window</div>
<div style="position:absolute;left:506.10px;top:168.00px;width:494.40px;height:31.10px;box-sizing:border-box;border:1px solid #e7e7e7;border-radius:3.2px;"></div>
<div style="position:absolute;left:515.60px;top:179.70px;width:16.40px;height:7.60px;box-sizing:border-box;background:#f8956f;border-radius:4px;"></div>
<div style="position:absolute;left:523.80px;top:177.50px;width:11.80px;height:11.80px;box-sizing:border-box;background:#f4511e;border-radius:6px;"></div>
<svg style="position:absolute;left:525.40px;top:179.10px;" width="8.6" height="8.6" viewBox="0 0 24 24" fill="#fff"><path d="M9 16.170L4.830 12l-1.420 1.410L9 19 21 7l-1.410-1.410z"/></svg>
<div style="position:absolute;left:544.40px;top:173.80px;line-height:20px;font-size:8.8px;color:#333;font-weight:normal;white-space:nowrap;letter-spacing:0.2px;">Display time window</div>
<div style="position:absolute;left:636.80px;top:174.20px;width:120.30px;height:19.60px;box-sizing:border-box;background:#fff;border:1px solid #e2e2e2;border-radius:2.5px;"></div>
<svg style="position:absolute;left:645.60px;top:179.30px;" width="9.4" height="9.4" viewBox="0 0 24 24" fill="#00695c"><path fill-rule="evenodd" d="M11.990 2C6.470 2 2 6.480 2 12s4.470 10 9.990 10C17.520 22 22 17.520 22 12S17.520 2 11.990 2zM12 20a8 8 0 1 1 0-16 8 8 0 0 1 0 16zm.5-13H11v6l5.250 3.150.75-1.230-4.500-2.670z"/></svg>
<div style="position:absolute;left:659.70px;top:174.20px;line-height:20px;font-size:7.8px;color:#00695c;font-weight:normal;white-space:nowrap;-webkit-text-stroke:0.32px #00695c;letter-spacing:0.24px;">Realtime - last 1 minute</div>
<div style="position:absolute;left:973.10px;top:172.40px;width:23.10px;height:22.00px;box-sizing:border-box;background:#fff;border:1px solid #e6e6e6;border-radius:2.6px;box-shadow:0 1px 1.500px rgba(0,0,0,0.10);"></div>
<svg style="position:absolute;left:977.80px;top:176.40px;" width="14.2" height="14.2" viewBox="0 0 24 24" fill="#5f5f5f"><path d="M18 4V3c0-.55-.45-1-1-1H5c-.55 0-1 .45-1 1v4c0 .55.45 1 1 1h12c.55 0 1-.45 1-1V6h1v4H9v11c0 .55.45 1 1 1h2c.55 0 1-.45 1-1v-9h8V4h-3z"/></svg>
<div style="position:absolute;left:497.00px;top:217.50px;width:512.00px;height:289.70px;box-sizing:border-box;background:#fff;border-radius:3px;box-shadow:0 0 4px 1.5px rgba(0,0,0,0.045);"></div>
<div style="position:absolute;left:506.60px;top:220.90px;line-height:20px;font-size:8.8px;color:#212121;font-weight:normal;white-space:nowrap;-webkit-text-stroke:0.35px #212121;letter-spacing:0.08px;">Datasources</div>
<div style="position:absolute;left:506.00px;top:259.00px;width:12.80px;height:12.80px;box-sizing:border-box;background:#e3f0ee;border-radius:6.4px;"></div>
<div style="position:absolute;left:412.40px;width:200px;text-align:center;top:255.60px;line-height:20px;font-size:8.2px;color:#5f9e95;font-weight:normal;white-space:nowrap;">1</div>
<div style="position:absolute;left:525.80px;top:249.20px;width:452.20px;height:31.50px;box-sizing:border-box;border:1px solid #e7e7e7;border-radius:3.2px;"></div>
<div style="position:absolute;left:532.80px;top:248.80px;width:19.80px;height:3.00px;box-sizing:border-box;background:#fff;"></div>
<div style="position:absolute;left:535.00px;top:240.10px;line-height:20px;font-size:6.6px;color:#7b7b7b;font-weight:normal;white-space:nowrap;letter-spacing:0.2px;">Type</div>
<div style="position:absolute;left:535.00px;top:255.40px;line-height:20px;font-size:8.8px;color:#222;font-weight:normal;white-space:nowrap;letter-spacing:0.25px;">Entity</div>
<svg style="position:absolute;left:959.90px;top:258.60px;" width="13.2" height="13.2" viewBox="0 0 24 24" fill="#666"><path d="M7 10l5 5 5-5z"/></svg>
<svg style="position:absolute;left:982.60px;top:258.30px;" width="13.2" height="13.2" viewBox="0 0 24 24" fill="#666"><path d="M6 19c0 1.100.9 2 2 2h8c1.100 0 2-.9 2-2V7H6v12zM19 4h-3.500l-1-1h-5l-1 1H5v2h14V4z"/></svg>
<div style="position:absolute;left:525.80px;top:292.90px;width:452.20px;height:31.10px;box-sizing:border-box;border:1px solid #e7e7e7;border-radius:3.2px;"></div>
<div style="position:absolute;left:532.80px;top:292.20px;width:42.60px;height:3.00px;box-sizing:border-box;background:#fff;"></div>
<div style="position:absolute;left:535.00px;top:283.60px;line-height:20px;font-size:6.6px;color:#7b7b7b;font-weight:normal;white-space:nowrap;letter-spacing:0.2px;">Entity alias*</div>
<div style="position:absolute;left:535.00px;top:298.20px;line-height:20px;font-size:8.8px;color:#222;font-weight:normal;white-space:nowrap;letter-spacing:0.2px;">Selected Device</div>
<svg style="position:absolute;left:931.60px;top:302.00px;" width="13.2" height="13.2" viewBox="0 0 24 24" fill="#555"><path d="M19 6.410L17.590 5 12 10.590 6.410 5 5 6.410 10.590 12 5 17.590 6.410 19 12 13.410 17.590 19 19 17.590 13.410 12z"/></svg>
<svg style="position:absolute;left:958.40px;top:301.80px;" width="13.2" height="13.2" viewBox="0 0 24 24" fill="#666"><path d="M3 17.250V21h3.750L17.810 9.940l-3.750-3.750L3 17.250zM20.710 7.040a1 1 0 0 0 0-1.410l-2.340-2.340a1 1 0 0 0-1.410 0l-1.830 1.830 3.750 3.750 1.830-1.830z"/></svg>
<div style="position:absolute;left:525.65px;top:335.70px;width:452.50px;height:31.55px;box-sizing:border-box;border:1.3px solid #00695c;border-radius:3.2px;"></div>
<div style="position:absolute;left:532.80px;top:334.80px;width:73.40px;height:3.60px;box-sizing:border-box;background:#fff;"></div>
<div style="position:absolute;left:535.00px;top:326.60px;line-height:20px;font-size:6.6px;color:#00695c;font-weight:normal;white-space:nowrap;letter-spacing:0.2px;">Time series data keys</div>
<div style="position:absolute;left:535.00px;top:343.20px;width:174.40px;height:16.80px;box-sizing:border-box;background:#e0e0e0;border-radius:8.4px;"></div>
<svg style="position:absolute;left:544.80px;top:346.70px;" width="10.0" height="10.0" viewBox="0 0 24 24" fill="#333"><path d="M23 8c0 1.100-.9 2-2 2a1.700 1.700 0 0 1-.51-.07l-3.560 3.550c.050.160.070.340.070.520 0 1.100-.9 2-2 2s-2-.9-2-2c0-.18.020-.36.070-.52l-2.550-2.550c-.16.050-.34.070-.52.070s-.36-.020-.52-.07l-4.550 4.560c.050.160.070.330.070.510 0 1.100-.9 2-2 2s-2-.9-2-2 .9-2 2-2c.18 0 .35.020.51.070l4.560-4.550C8.020 9.360 8 9.180 8 9c0-1.100.9-2 2-2s2 .9 2 2c0 .18-.020.36-.070.520l2.550 2.550c.16-.050.34-.070.52-.070s.36.020.52.070l3.550-3.560A1.700 1.700 0 0 1 19 8c0-1.100.9-2 2-2s2 .9 2 2z"/></svg>
<div style="position:absolute;left:557.40px;top:341.80px;line-height:20px;font-size:7.7px;color:#333;font-weight:normal;white-space:nowrap;letter-spacing:0.16px;">Temperature: temperature</div>
<div style="position:absolute;left:660.20px;top:346.60px;width:10.10px;height:9.60px;box-sizing:border-box;background:#e91e63;border-radius:1.800px;"></div>
<svg style="position:absolute;left:675.80px;top:346.90px;" width="9.6" height="9.6" viewBox="0 0 24 24" fill="#333"><path d="M3 17.250V21h3.750L17.810 9.940l-3.750-3.750L3 17.250zM20.710 7.040a1 1 0 0 0 0-1.410l-2.340-2.340a1 1 0 0 0-1.410 0l-1.830 1.830 3.750 3.750 1.830-1.830z"/></svg>
<svg style="position:absolute;left:691.60px;top:347.10px;" width="9.4" height="9.4" viewBox="0 0 24 24" fill="#444"><path d="M19 6.410L17.590 5 12 10.590 6.410 5 5 6.410 10.590 12 5 17.590 6.410 19 12 13.410 17.590 19 19 17.590 13.410 12z"/></svg>
<div style="position:absolute;left:714.10px;top:341.90px;line-height:20px;font-size:8.8px;color:#7c7c7c;font-weight:normal;white-space:nowrap;">+Add</div>
<div style="position:absolute;left:525.80px;top:378.60px;width:452.20px;height:31.60px;box-sizing:border-box;border:1px solid #e7e7e7;border-radius:3.2px;"></div>
<div style="position:absolute;left:535.00px;top:385.80px;line-height:20px;font-size:8.8px;color:#8a8a8a;font-weight:normal;white-space:nowrap;letter-spacing:0.28px;">Latest data keys</div>
<div style="position:absolute;left:525.80px;top:422.00px;width:452.20px;height:31.30px;box-sizing:border-box;border:1px solid #e7e7e7;border-radius:3.2px;"></div>
<div style="position:absolute;left:535.00px;top:428.90px;line-height:20px;font-size:8.8px;color:#8a8a8a;font-weight:normal;white-space:nowrap;letter-spacing:0.28px;">Filter</div>
<div style="position:absolute;left:927.80px;top:427.50px;line-height:20px;font-size:7.8px;color:#00695c;font-weight:normal;white-space:nowrap;-webkit-text-stroke:0.32px #00695c;letter-spacing:0.13px;">Create new</div>
<div style="position:absolute;left:506.10px;top:478.90px;width:76.10px;height:20.20px;box-sizing:border-box;background:#fff;border:1px solid #e2e2e2;border-radius:2.5px;"></div>
<div style="position:absolute;left:515.10px;top:479.20px;line-height:20px;font-size:7.8px;color:#00695c;font-weight:normal;white-space:nowrap;-webkit-text-stroke:0.32px #00695c;letter-spacing:0.24px;">Add datasource</div>
<div style="position:absolute;left:497.00px;top:516.70px;width:512.00px;height:68.00px;box-sizing:border-box;background:#fff;border-radius:3px;box-shadow:0 0 4px 1.5px rgba(0,0,0,0.045);"></div>
<div style="position:absolute;left:506.60px;top:520.90px;line-height:20px;font-size:8.8px;color:#212121;font-weight:normal;white-space:nowrap;-webkit-text-stroke:0.35px #212121;letter-spacing:0.23px;">Limits</div>
<div style="position:absolute;left:506.10px;top:544.70px;width:494.10px;height:31.10px;box-sizing:border-box;border:1px solid #e7e7e7;border-radius:3.2px;"></div>
<div style="position:absolute;left:515.60px;top:550.80px;line-height:20px;font-size:8.8px;color:#333;font-weight:normal;white-space:nowrap;letter-spacing:0.17px;">Maximum entities per datasource</div>
<div style="position:absolute;left:937.00px;top:548.90px;width:59.10px;height:23.10px;box-sizing:border-box;border:1px solid #e2e2e2;border-radius:2.6px;"></div>
<div style="position:absolute;left:943.80px;top:550.60px;line-height:20px;font-size:7.6px;color:#333;font-weight:normal;white-space:nowrap;letter-spacing:0.2px;">1024</div>
<svg style="left:986.5px;top:555px" width="6" height="11" viewBox="0 0 6 11"><path d="M3 1L5.200 4.200H.8zM3 10L.8 6.800h4.400z" fill="#777"/></svg>
<div style="position:absolute;left:712.00px;top:360.10px;width:93.90px;height:143.80px;box-sizing:border-box;background:#fff;border:2.1px solid #f74444;box-shadow:0 2px 5px rgba(0,0,0,0.28);"></div>
<svg style="position:absolute;left:722.60px;top:370.70px;" width="13.4" height="13.4" viewBox="0 0 24 24" fill="#222"><path d="M23 8c0 1.100-.9 2-2 2a1.700 1.700 0 0 1-.51-.07l-3.560 3.550c.050.160.070.340.070.520 0 1.100-.9 2-2 2s-2-.9-2-2c0-.18.020-.36.070-.52l-2.550-2.550c-.16.050-.34.070-.52.070s-.36-.020-.52-.07l-4.550 4.560c.050.160.070.330.070.510 0 1.100-.9 2-2 2s-2-.9-2-2 .9-2 2-2c.18 0 .35.020.51.070l4.560-4.550C8.020 9.360 8 9.180 8 9c0-1.100.9-2 2-2s2 .9 2 2c0 .18-.020.36-.070.520l2.550 2.550c.16-.050.34-.070.52-.070s.36.020.52.070l3.550-3.560A1.700 1.700 0 0 1 19 8c0-1.100.9-2 2-2s2 .9 2 2z"/></svg>
<div style="position:absolute;left:744.80px;top:367.30px;line-height:20px;font-size:9.0px;color:#444;font-weight:normal;white-space:nowrap;letter-spacing:0.25px;">battery</div>
<svg style="position:absolute;left:722.60px;top:397.50px;" width="13.4" height="13.4" viewBox="0 0 24 24" fill="#222"><path d="M23 8c0 1.100-.9 2-2 2a1.700 1.700 0 0 1-.51-.07l-3.560 3.550c.050.160.070.340.070.520 0 1.100-.9 2-2 2s-2-.9-2-2c0-.18.020-.36.070-.52l-2.550-2.550c-.16.050-.34.070-.52.070s-.36-.020-.52-.07l-4.550 4.560c.050.160.070.330.070.510 0 1.100-.9 2-2 2s-2-.9-2-2 .9-2 2-2c.18 0 .35.020.51.070l4.560-4.550C8.020 9.360 8 9.180 8 9c0-1.100.9-2 2-2s2 .9 2 2c0 .18-.020.36-.070.520l2.550 2.550c.16-.050.34-.070.52-.070s.36.020.52.070l3.550-3.560A1.700 1.700 0 0 1 19 8c0-1.100.9-2 2-2s2 .9 2 2z"/></svg>
<div style="position:absolute;left:744.80px;top:394.10px;line-height:20px;font-size:9.0px;color:#444;font-weight:normal;white-space:nowrap;letter-spacing:0.25px;">fuelHeight</div>
<svg style="position:absolute;left:722.60px;top:424.10px;" width="13.4" height="13.4" viewBox="0 0 24 24" fill="#222"><path d="M23 8c0 1.100-.9 2-2 2a1.700 1.700 0 0 1-.51-.07l-3.560 3.550c.050.160.070.340.070.520 0 1.100-.9 2-2 2s-2-.9-2-2c0-.18.020-.36.070-.52l-2.550-2.550c-.16.050-.34.070-.52.070s-.36-.020-.52-.07l-4.550 4.560c.050.160.070.330.070.510 0 1.100-.9 2-2 2s-2-.9-2-2 .9-2 2-2c.18 0 .35.020.51.070l4.560-4.550C8.020 9.360 8 9.180 8 9c0-1.100.9-2 2-2s2 .9 2 2c0 .18-.020.36-.070.520l2.550 2.550c.16-.050.34-.070.52-.070s.36.020.52.070l3.550-3.560A1.700 1.700 0 0 1 19 8c0-1.100.9-2 2-2s2 .9 2 2z"/></svg>
<div style="position:absolute;left:744.80px;top:420.70px;line-height:20px;font-size:9.0px;color:#444;font-weight:normal;white-space:nowrap;letter-spacing:0.25px;">fuelLevel</div>
<svg style="position:absolute;left:722.60px;top:450.70px;" width="13.4" height="13.4" viewBox="0 0 24 24" fill="#222"><path d="M23 8c0 1.100-.9 2-2 2a1.700 1.700 0 0 1-.51-.07l-3.560 3.550c.050.160.070.340.070.520 0 1.100-.9 2-2 2s-2-.9-2-2c0-.18.020-.36.070-.52l-2.550-2.550c-.16.050-.34.070-.52.070s-.36-.020-.52-.07l-4.550 4.560c.050.160.070.330.070.510 0 1.100-.9 2-2 2s-2-.9-2-2 .9-2 2-2c.18 0 .35.020.51.070l4.560-4.550C8.020 9.360 8 9.180 8 9c0-1.100.9-2 2-2s2 .9 2 2c0 .18-.020.36-.070.520l2.550 2.550c.16-.050.34-.070.52-.070s.36.020.52.070l3.550-3.560A1.700 1.700 0 0 1 19 8c0-1.100.9-2 2-2s2 .9 2 2z"/></svg>
<div style="position:absolute;left:744.80px;top:447.30px;line-height:20px;font-size:9.0px;color:#444;font-weight:normal;white-space:nowrap;letter-spacing:0.25px;">humidity</div>
<svg style="position:absolute;left:722.60px;top:477.30px;" width="13.4" height="13.4" viewBox="0 0 24 24" fill="#222"><path d="M23 8c0 1.100-.9 2-2 2a1.700 1.700 0 0 1-.51-.07l-3.560 3.550c.050.160.070.340.070.520 0 1.100-.9 2-2 2s-2-.9-2-2c0-.18.020-.36.070-.52l-2.550-2.550c-.16.050-.34.070-.52.070s-.36-.020-.52-.07l-4.550 4.560c.050.160.070.330.070.510 0 1.100-.9 2-2 2s-2-.9-2-2 .9-2 2-2c.18 0 .35.020.51.070l4.560-4.550C8.020 9.360 8 9.180 8 9c0-1.100.9-2 2-2s2 .9 2 2c0 .18-.020.36-.070.520l2.550 2.550c.16-.050.34-.070.52-.070s.36.020.52.070l3.550-3.560A1.700 1.700 0 0 1 19 8c0-1.100.9-2 2-2s2 .9 2 2z"/></svg>
<div style="position:absolute;left:744.80px;top:473.90px;line-height:20px;font-size:9.0px;color:#444;font-weight:normal;white-space:nowrap;letter-spacing:0.25px;">temperature</div>
<div style="position:absolute;left:714.30px;top:391.20px;width:89.50px;height:0.60px;box-sizing:border-box;background:#efefef;"></div>
<div style="position:absolute;left:714.30px;top:417.60px;width:89.50px;height:0.60px;box-sizing:border-box;background:#efefef;"></div>
<div style="position:absolute;left:714.30px;top:444.60px;width:89.50px;height:0.60px;box-sizing:border-box;background:#efefef;"></div>
<div style="position:absolute;left:714.30px;top:470.80px;width:89.50px;height:0.60px;box-sizing:border-box;background:#efefef;"></div>
<div style="position:absolute;left:714.30px;top:497.50px;width:89.50px;height:0.60px;box-sizing:border-box;background:#efefef;"></div>
<svg style="left:0;top:0" width="1018" height="723" viewBox="0 0 1018 723"><polygon points="724.800,353.5 733.64,341.81 735.59,345.19 819.3,298.9 737.39,348.31 739.34,351.69" fill="#f74444"/></svg>
</body></html>
